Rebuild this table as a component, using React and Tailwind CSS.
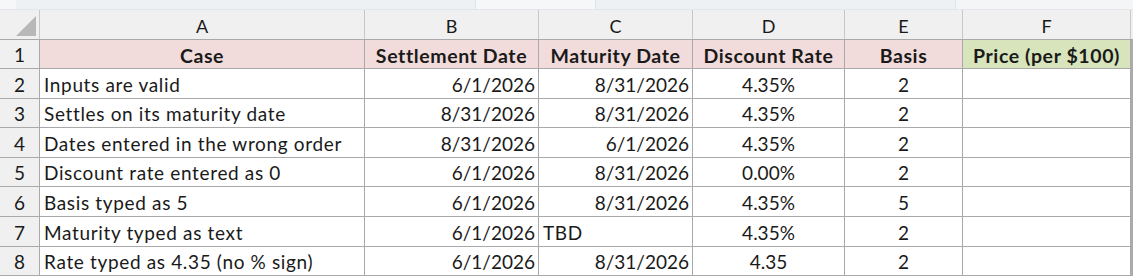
import React from "react";

const colW = ["w-[325px]", "w-[174px]", "w-[154px]", "w-[152px]", "w-[118px]", "w-[168px]"];
const letters = ["A", "B", "C", "D", "E", "F"];

const rows = [
  ["Inputs are valid", "6/1/2026", "8/31/2026", "4.35%", "2", ""],
  ["Settles on its maturity date", "8/31/2026", "8/31/2026", "4.35%", "2", ""],
  ["Dates entered in the wrong order", "8/31/2026", "6/1/2026", "4.35%", "2", ""],
  ["Discount rate entered as 0", "6/1/2026", "8/31/2026", "0.00%", "2", ""],
  ["Basis typed as 5", "6/1/2026", "8/31/2026", "4.35%", "5", ""],
  ["Maturity typed as text", "6/1/2026", "TBD", "4.35%", "2", ""],
  ["Rate typed as 4.35 (no % sign)", "6/1/2026", "8/31/2026", "4.35", "2", ""],
];
const rowH = ["h-[30px]", "h-[29px]", "h-[30px]", "h-[29px]", "h-[30px]", "h-[30px]", "h-[29px]"];

const headers = ["Case", "Settlement Date", "Maturity Date", "Discount Rate", "Basis", "Price (per $100)"];

function align(ci, val) {
  if (ci === 0) return "justify-start pl-[4px] tracking-[0.65px]";
  if (ci === 1) return "justify-end pr-[3px]";
  if (ci === 2) return val === "TBD" ? "justify-start pl-[4px] tracking-[0.6px]" : "justify-end pr-[3px]";
  return "justify-center";
}

export default function App() {
  return (
    <div
      className="w-[1133px] h-[278px] bg-white overflow-hidden text-[#1a1a1a]"
      style={{ fontFamily: "Lato, 'Open Sans', sans-serif" }}
    >
      {/* top strip */}
      <div className="h-[10px] flex bg-[#eef1f4] border-b border-[#e2e5e9]">
        <div className="w-[16px] bg-[#f6f7f9]" />
        <div className="w-[460px] border-r border-[#e0e3e7]" />
        <div className="w-[120px] bg-[#f6f7f9] border-r border-[#e0e3e7]" />
        <div className="w-[360px] border-r border-[#e0e3e7]" />
        <div className="flex-1 bg-[#f3f5f7]" />
      </div>
      {/* column header row */}
      <div className="h-[30px] flex bg-[#f0f0f0] border-b border-[#a9a9a9]">
        <div className="w-[40px] h-full border-r border-[#c8c8c8] flex items-end justify-end pr-[3px] pb-[3px]">
          <svg width="20" height="20" viewBox="0 0 20 20">
            <polygon points="20,0 20,20 0,20" fill="#b8b8b8" />
          </svg>
        </div>
        {letters.map((l, i) => (
          <div
            key={l}
            className={`${colW[i]} h-full border-r border-[#c8c8c8] flex items-center justify-center text-[18px] pt-[3px]`}
          >
            {l}
          </div>
        ))}
        <div className="flex-1" />
      </div>
      {/* row 1 */}
      <div className="h-[29px] flex border-b border-[#a9a9a9]">
        <div className="w-[40px] h-full bg-[#f0f0f0] border-r border-[#a9a9a9] flex items-center justify-center text-[19px] pt-[3px]">
          1
        </div>
        {headers.map((h, i) => (
          <div
            key={h}
            className={`${colW[i]} h-full border-r border-[#a9a9a9] flex items-center justify-center font-bold text-[19.5px] tracking-[0.6px] pt-[3px] ${
              i === 5 ? "bg-[#d8e4bc]" : "bg-[#f2dcdb]"
            }`}
          >
            {h}
          </div>
        ))}
        <div className="flex-1 bg-[#ababab]" />
      </div>
      {rows.map((r, ri) => (
        <div key={ri} className={`${rowH[ri]} flex border-b border-[#a9a9a9]`}>
          <div className="w-[40px] h-full bg-[#f0f0f0] border-r border-[#a9a9a9] flex items-center justify-center text-[19px] pt-[3px]">
            {ri + 2}
          </div>
          {r.map((v, ci) => (
            <div
              key={ci}
              className={`${colW[ci]} h-full border-r border-[#a9a9a9] flex items-center text-[19px] whitespace-nowrap pt-[3px] ${align(ci, v)}`}
            >
              {v}
            </div>
          ))}
          <div className="flex-1 bg-[#ababab]" />
        </div>
      ))}
    </div>
  );
}
